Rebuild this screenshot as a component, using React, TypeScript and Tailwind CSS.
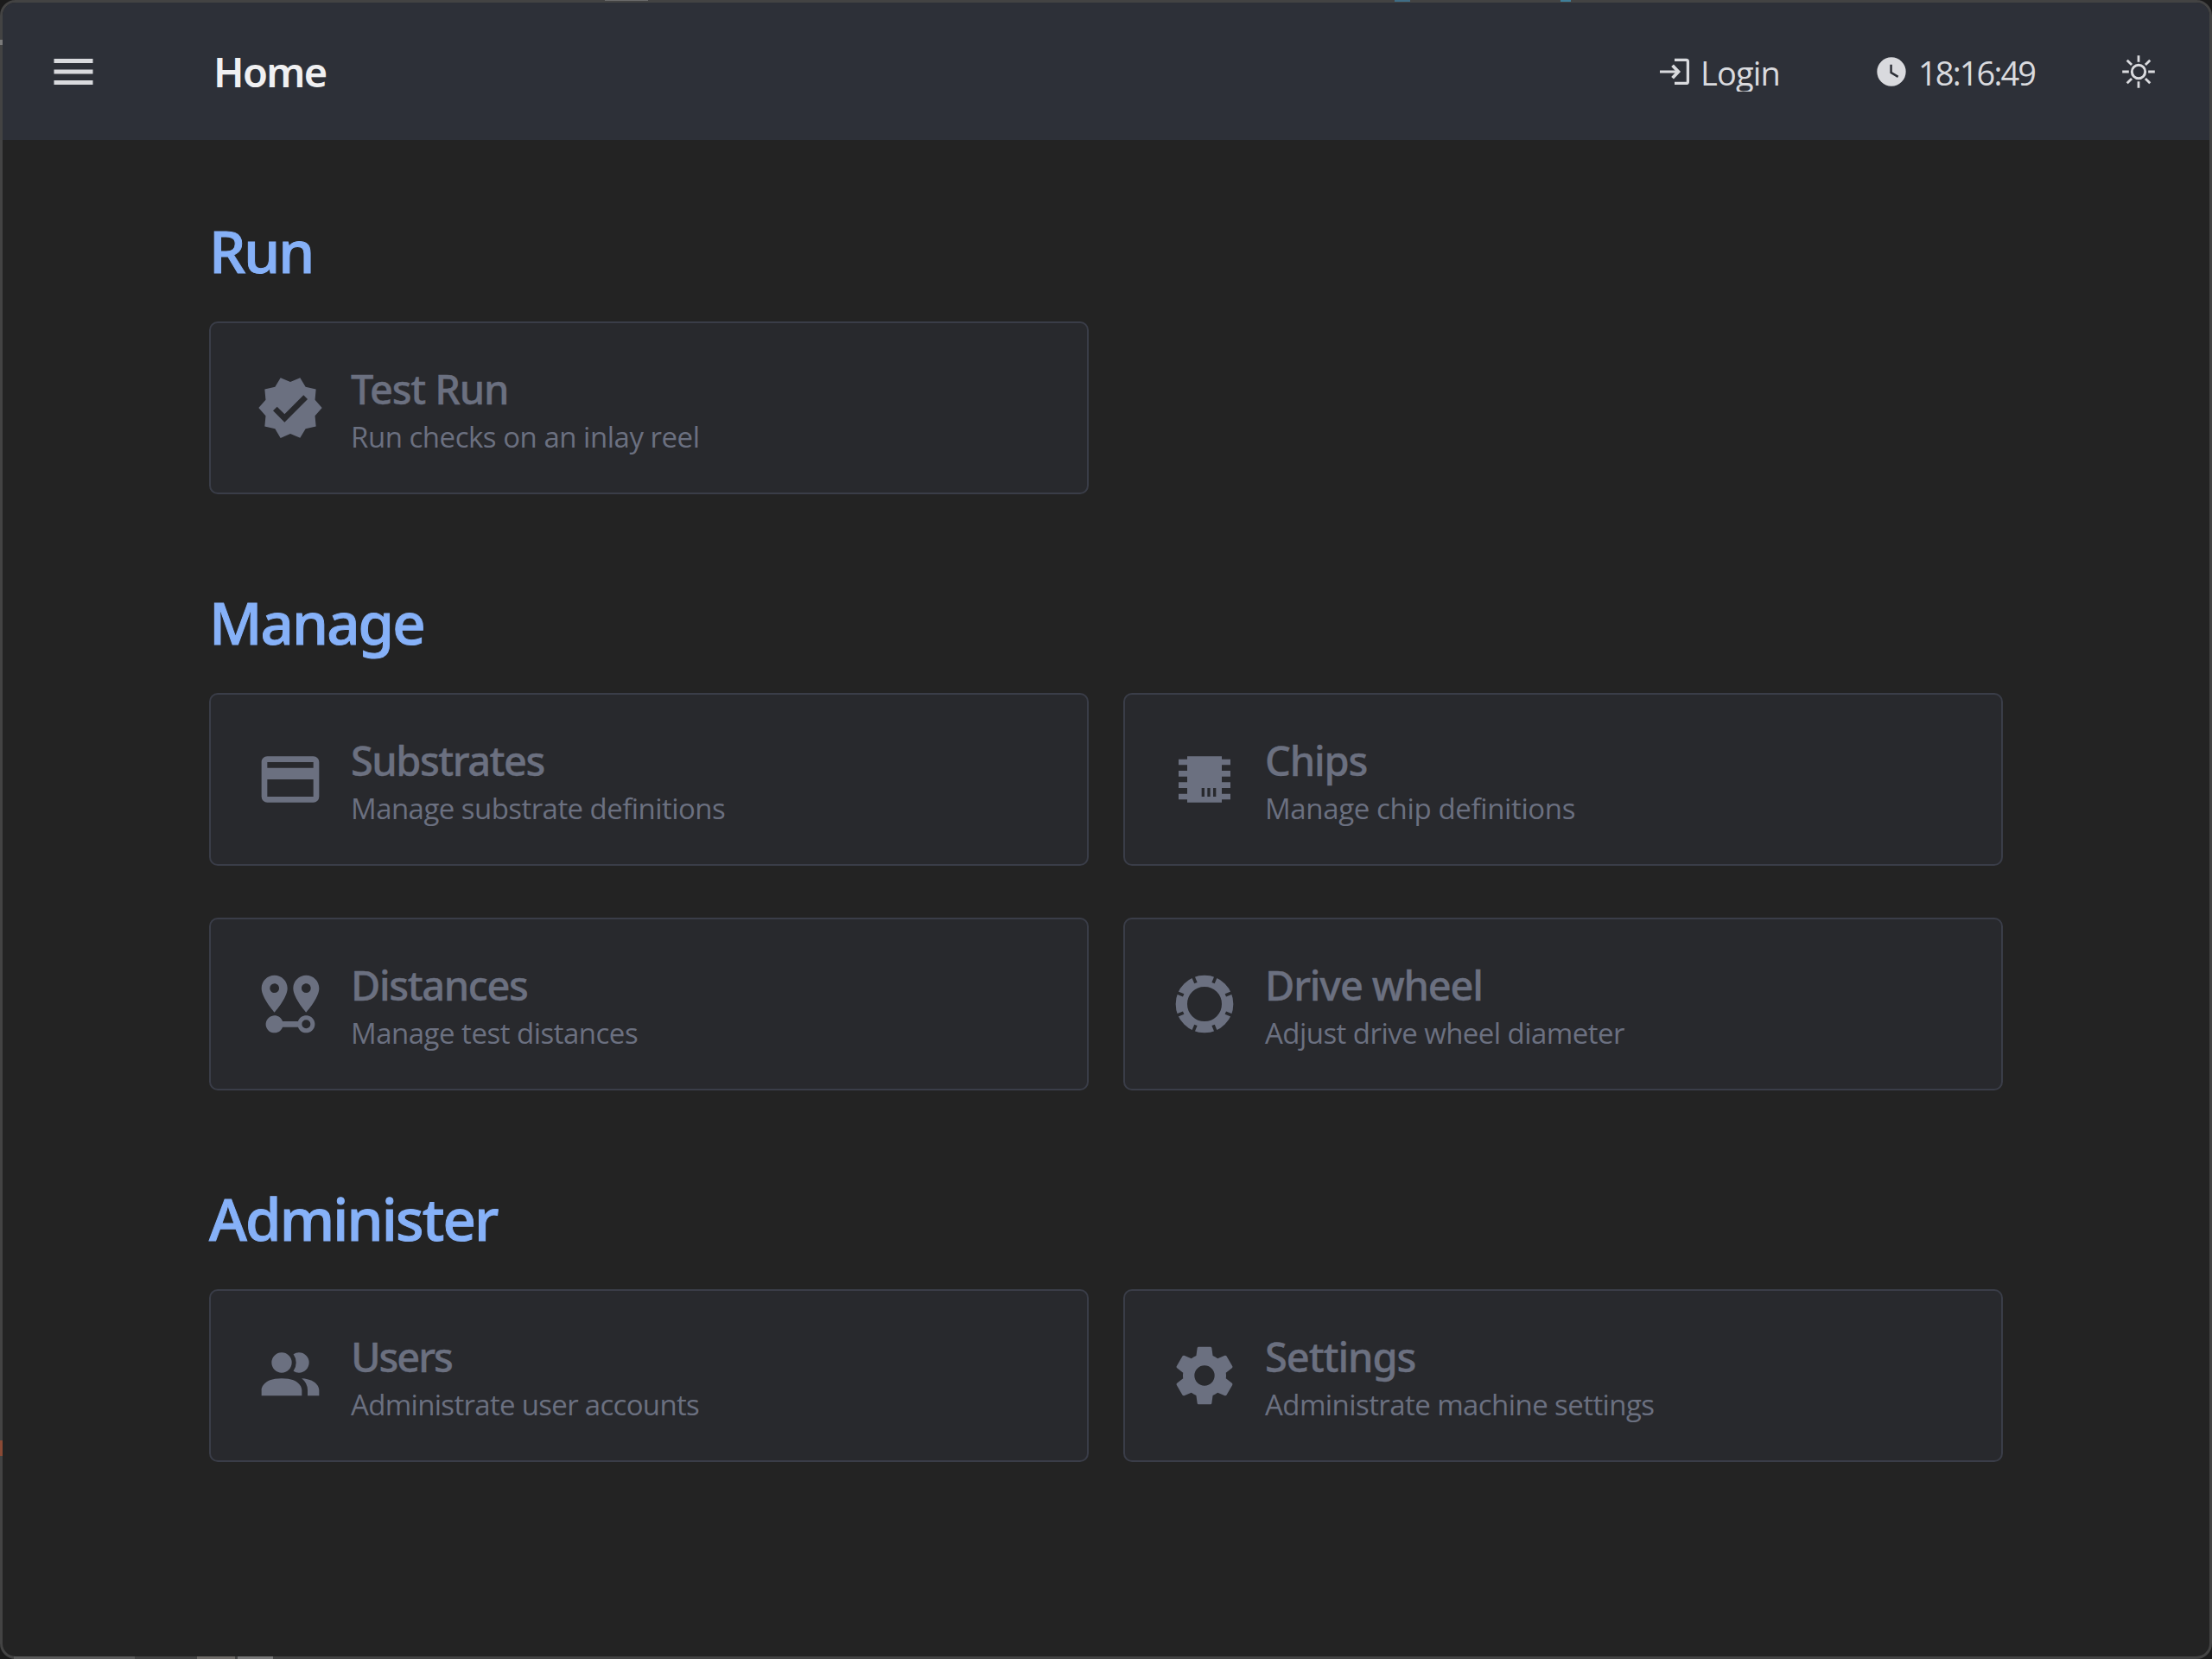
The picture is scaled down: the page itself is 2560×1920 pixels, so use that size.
import type { ReactNode } from "react";

const ICONS = {
  menu: "M3,6H21V8H3V6M3,11H21V13H3V11M3,16H21V18H3V16Z",
  clock:
    "M12,2A10,10 0 0,0 2,12A10,10 0 0,0 12,22A10,10 0 0,0 22,12A10,10 0 0,0 12,2M16.2,16.2L11,13V7H12.5V12.2L17,14.9L16.2,16.2Z",
  verified:
    "M23,12L20.56,9.22L20.9,5.54L17.29,4.72L15.4,1.54L12,3L8.6,1.54L6.71,4.72L3.1,5.53L3.44,9.21L1,12L3.44,14.78L3.1,18.47L6.71,19.29L8.6,22.47L12,21L15.4,22.46L17.29,19.28L20.9,18.46L20.56,14.78L23,12M10,17L6,13L7.41,11.59L10,14.17L16.59,7.58L18,9L10,17Z",
  card: "M20,8H4V6H20M20,18H4V12H20M20,4H4C2.89,4 2,4.89 2,6V18A2,2 0 0,0 4,20H20A2,2 0 0,0 22,18V6C22,4.89 21.1,4 20,4Z",
  chip: "M6,4H18V5H21V7H18V9H21V11H18V13H21V15H18V17H21V19H18V20H6V19H3V17H6V15H3V13H6V11H3V9H6V7H3V5H6V4M11,15V18H12V15H11M13,15V18H14V15H13M15,15V18H16V15H15Z",
  distance:
    "M6.5,8.11C5.61,8.11 4.89,7.39 4.89,6.5A1.61,1.61 0 0,1 6.5,4.89C7.39,4.89 8.11,5.61 8.11,6.5A1.61,1.61 0 0,1 6.5,8.11M6.5,2C4,2 2,4 2,6.5C2,9.87 6.5,14.86 6.5,14.86C6.5,14.86 11,9.87 11,6.5C11,4 9,2 6.5,2M17.5,8.11A1.61,1.61 0 0,1 15.89,6.5C15.89,5.61 16.61,4.89 17.5,4.89C18.39,4.89 19.11,5.61 19.11,6.5A1.61,1.61 0 0,1 17.5,8.11M17.5,2C15,2 13,4 13,6.5C13,9.87 17.5,14.86 17.5,14.86C17.5,14.86 22,9.87 22,6.5C22,4 20,2 17.5,2M17.5,16C16.23,16 15.1,16.8 14.68,18H9.32C8.77,16.44 7.05,15.62 5.5,16.17C3.93,16.72 3.11,18.44 3.66,20C4.22,21.56 5.93,22.38 7.5,21.83C8.35,21.53 9,20.85 9.32,20H14.69C15.24,21.56 16.96,22.38 18.5,21.83C20.08,21.28 20.9,19.56 20.35,18C19.92,16.8 18.78,16 17.5,16M17.5,20.5A1.5,1.5 0 0,1 16,19A1.5,1.5 0 0,1 17.5,17.5A1.5,1.5 0 0,1 19,19A1.5,1.5 0 0,1 17.5,20.5Z",
  users:
    "M16 17V19H2V17S2 13 9 13 16 17 16 17M12.5 7.5A3.5 3.5 0 1 0 9 11A3.5 3.5 0 0 0 12.5 7.5M15.94 13A5.32 5.32 0 0 1 18 17V19H22V17S22 13.37 15.94 13M15 4A3.39 3.39 0 0 0 13.07 4.59A5 5 0 0 1 13.07 10.41A3.39 3.39 0 0 0 15 11A3.5 3.5 0 0 0 15 4Z",
  cog: "M12,15.5A3.5,3.5 0 0,1 8.5,12A3.5,3.5 0 0,1 12,8.5A3.5,3.5 0 0,1 15.5,12A3.5,3.5 0 0,1 12,15.5M19.43,12.97C19.47,12.65 19.5,12.33 19.5,12C19.5,11.67 19.47,11.34 19.43,11L21.54,9.37C21.73,9.22 21.78,8.95 21.66,8.73L19.66,5.27C19.54,5.05 19.27,4.96 19.05,5.05L16.56,6.05C16.04,5.66 15.5,5.32 14.87,5.07L14.5,2.42C14.46,2.18 14.25,2 14,2H10C9.75,2 9.54,2.18 9.5,2.42L9.13,5.07C8.5,5.32 7.96,5.66 7.44,6.05L4.95,5.05C4.73,4.96 4.46,5.05 4.34,5.27L2.34,8.73C2.21,8.95 2.27,9.22 2.46,9.37L4.57,11C4.53,11.34 4.5,11.67 4.5,12C4.5,12.33 4.53,12.65 4.57,12.97L2.46,14.63C2.27,14.78 2.21,15.05 2.34,15.27L4.34,18.73C4.46,18.95 4.73,19.03 4.95,18.95L7.44,17.94C7.96,18.34 8.5,18.68 9.13,18.93L9.5,21.58C9.54,21.82 9.75,22 10,22H14C14.25,22 14.46,21.82 14.5,21.58L14.87,18.93C15.5,18.67 16.04,18.34 16.56,17.94L19.05,18.95C19.27,19.03 19.54,18.95 19.66,18.73L21.66,15.27C21.78,15.05 21.73,14.78 21.54,14.63L19.43,12.97Z",
};

function Icon({ name, className = "size-20" }: { name: keyof typeof ICONS; className?: string }) {
  return (
    <svg viewBox="0 0 24 24" fill="currentColor" className={`shrink-0 ${className}`}>
      <path d={ICONS[name]} />
    </svg>
  );
}

function TireIcon() {
  const angles = [22.5, 67.5, 112.5, 157.5, 202.5, 247.5, 292.5, 337.5];
  return (
    <svg viewBox="0 0 24 24" className="size-20 shrink-0">
      <circle cx="12" cy="12" r="8" fill="none" stroke="currentColor" strokeWidth="4" />
      {angles.map((a) => (
        <path key={a} d="M12 1.5V4.1" stroke="#28292d" strokeWidth="1.1" transform={`rotate(${a} 12 12)`} />
      ))}
    </svg>
  );
}

function LoginIcon() {
  return (
    <svg viewBox="0 0 40 40" fill="none" stroke="currentColor" className="size-10 shrink-0">
      <path d="M3 20H24" strokeWidth="3.2" />
      <path d="M17.6 12.8L24.4 20L17.6 27.2" strokeWidth="3.8" />
      <path d="M20 6.3H33.4A2 2 0 0 1 35.4 8.3V31.4A2 2 0 0 1 33.4 33.4H20" strokeWidth="3.3" />
    </svg>
  );
}

function SunIcon() {
  const angles = [0, 45, 90, 135, 180, 225, 270, 315];
  return (
    <svg viewBox="0 0 40 40" fill="none" stroke="currentColor" className="size-10 shrink-0">
      <circle cx="20" cy="20" r="7.7" strokeWidth="3" />
      {angles.map((a) => (
        <path key={a} d="M20 1.2V8.8" strokeWidth="2.8" transform={`rotate(${a} 20 20)`} />
      ))}
    </svg>
  );
}

type CardProps = {
  icon: ReactNode;
  title: string;
  text: string;
  titleClass: string;
  textClass: string;
};

function Card({ icon, title, text, titleClass, textClass }: CardProps) {
  return (
    <button className="flex h-[200px] items-center gap-[30px] rounded-[10px] border-2 border-[#3a3d48] bg-[#28292d] pl-[52px] text-left text-[#6b7080]">
      {icon}
      <span className="flex flex-col whitespace-nowrap pt-0.5">
        <span
          className={`font-['Noto_Sans',sans-serif] text-[47px] leading-[64px] font-medium [-webkit-text-stroke:0.4px_currentColor] ${titleClass}`}
        >
          {title}
        </span>
        <span className={`text-[33px] leading-[47px] ${textClass}`}>{text}</span>
      </span>
    </button>
  );
}

function Section({ title, titleClass, children }: { title: string; titleClass: string; children: ReactNode }) {
  return (
    <section className="flex flex-col gap-[42px]">
      <h2
        className={`font-['Noto_Sans',sans-serif] text-[67px] leading-[80px] font-medium text-[#86b1f8] [-webkit-text-stroke:1px_currentColor] ${titleClass}`}
      >
        {title}
      </h2>
      <div className="grid grid-cols-2 gap-x-10 gap-y-[60px]">{children}</div>
    </section>
  );
}

export default function App() {
  return (
    <div className="relative h-[1920px] w-[2560px] overflow-hidden bg-[#1b1b1b] font-['Open_Sans',sans-serif]">
      <div className="flex h-full flex-col overflow-hidden rounded-[18px] border-[3px] border-[#434343] bg-[#232323]">
        <header className="flex h-[159px] shrink-0 items-center bg-[#2d3038] pr-[62px] pl-[52px] text-[#d9dade]">
          <Icon name="menu" className="size-[60px]" />
          <h1 className="ml-[132px] font-['Noto_Sans',sans-serif] text-[47px] leading-[64px] font-semibold tracking-[-1.6px] text-[#f0f0f2]">
            Home
          </h1>
          <button className="ml-auto flex w-[142px] items-center gap-[10px]">
            <LoginIcon />
            <span className="h-[46px] overflow-hidden text-[38px] leading-[48px] tracking-[-0.85px]">Login</span>
          </button>
          <div className="ml-[109px] flex w-[188px] items-center gap-[11px]">
            <Icon name="clock" className="size-10" />
            <span className="h-[46px] text-[38px] leading-[48px] tracking-[-1.9px]">18:16:49</span>
          </div>
          <button className="ml-[98px]">
            <SunIcon />
          </button>
        </header>

        <main className="flex flex-col gap-[108px] px-[239px] pt-[88px]">
          <Section title="Run" titleClass="tracking-[-2px]">
            <Card
              icon={<Icon name="verified" />}
              title="Test Run"
              text="Run checks on an inlay reel"
              titleClass="tracking-[-1.2px]"
              textClass="tracking-[-0.48px]"
            />
          </Section>
          <Section title="Manage" titleClass="tracking-[-1.9px]">
            <Card
              icon={<Icon name="card" />}
              title="Substrates"
              text="Manage substrate definitions"
              titleClass="tracking-[-1.51px]"
              textClass="tracking-[-0.55px]"
            />
            <Card
              icon={<Icon name="chip" />}
              title="Chips"
              text="Manage chip definitions"
              titleClass="tracking-[-1.18px]"
              textClass="tracking-[-0.36px]"
            />
            <Card
              icon={<Icon name="distance" />}
              title="Distances"
              text="Manage test distances"
              titleClass="tracking-[-1.41px]"
              textClass="tracking-[-0.5px]"
            />
            <Card
              icon={<TireIcon />}
              title="Drive wheel"
              text="Adjust drive wheel diameter"
              titleClass="tracking-[-1.2px]"
              textClass="tracking-[-0.55px]"
            />
          </Section>
          <Section title="Administer" titleClass="tracking-[-1.85px]">
            <Card
              icon={<Icon name="users" />}
              title="Users"
              text="Administrate user accounts"
              titleClass="tracking-[-2.1px]"
              textClass="tracking-[-0.69px]"
            />
            <Card
              icon={<Icon name="cog" />}
              title="Settings"
              text="Administrate machine settings"
              titleClass="tracking-[-1.1px]"
              textClass="tracking-[-0.58px]"
            />
          </Section>
        </main>
      </div>

      {/* Slivers of the desktop behind the window's translucent frame */}
      <div className="absolute top-0 left-[700px] h-px w-[50px] bg-[#6a6a6a]" />
      <div className="absolute top-0 left-[1614px] h-0.5 w-[18px] bg-[#3f6d86]" />
      <div className="absolute top-0 left-[1806px] h-0.5 w-3 bg-[#3f7f9a]" />
      <div className="absolute top-[46px] left-0 h-[6px] w-[3px] bg-[#7a7a7a]" />
      <div className="absolute top-[1667px] left-0 h-[18px] w-[3px] bg-[#8a4a35]" />
      <div className="absolute bottom-0 left-4 h-[3px] w-[140px] bg-[#5a5a5a]" />
      <div className="absolute bottom-0 left-[228px] h-[3px] w-[44px] bg-[#6e6b68]" />
      <div className="absolute bottom-0 left-[275px] h-[3px] w-[41px] bg-[#777777]" />
    </div>
  );
}
